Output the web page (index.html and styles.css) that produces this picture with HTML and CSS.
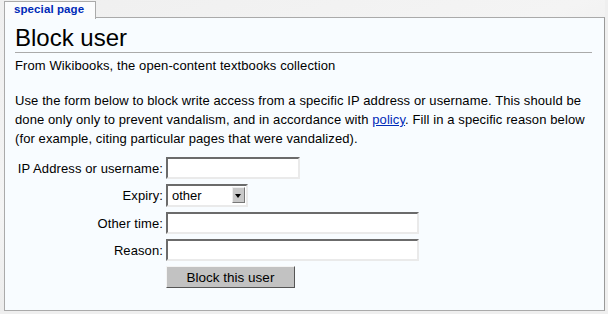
FILE: index.html
```html
<!DOCTYPE html>
<html lang="en">
<head>
  <meta charset="UTF-8">
  <title>Block user</title>
  <link rel="stylesheet" href="styles.css">
</head>
<body>
  <div class="page">
    <div class="tabs">
      <a class="tab" href="#">special page</a>
    </div>
    <div class="content">
      <h1 class="title">Block user</h1>
      <div class="sitesub">From Wikibooks, the open-content textbooks collection</div>
      <p class="intro">Use the form below to block write access from a specific IP address or username. This should be done only only to prevent vandalism, and in accordance with <a href="#">policy</a>. Fill in a specific reason below (for example, citing particular pages that were vandalized).</p>
      <form class="block-form">
        <label for="ip">IP Address or username:</label>
        <input id="ip" class="field field-short" type="text">

        <label for="expiry">Expiry:</label>
        <span class="select-wrap">
          <select id="expiry" class="select"><option>other</option></select>
          <span class="select-btn"></span>
        </span>

        <label for="other">Other time:</label>
        <input id="other" class="field field-long" type="text">

        <label for="reason">Reason:</label>
        <input id="reason" class="field field-long" type="text">

        <span></span>
        <button class="btn" type="button">Block this user</button>
      </form>
    </div>
  </div>
</body>
</html>
```

FILE: styles.css
```css
body{
  margin: 0;
  background: #efefef;
  font-family: "Liberation Sans", Arial, sans-serif;
  font-size: 13px;
  letter-spacing: 0.1px;
  color: #000;
}
.page{
  padding: 0 0 0 4px;
  width: 601px;
  background: linear-gradient(160deg, #efefef 0%, #f4f4f4 40%, #ececec 60%, #f1f1f1 100%);
}

.tabs{
  display: flex;
  height: 17px;
}
.tab{
  position: relative;
  z-index: 2;
  display: block;
  box-sizing: border-box;
  width: 92px;
  height: 18px;
  margin-top: 1px;
  padding-left: 9px;
  border: 1px solid #aaa;
  border-bottom: none;
  background: #fbfcfd;
  color: #002bb8;
  font-size: 11.5px;
  font-weight: bold;
  line-height: 14px;
  text-decoration: none;
}

.content{
  box-sizing: border-box;
  width: 601px;
  height: 294px;
  padding: 0 12px 0 10px;
  border: 1px solid #aaa;
  border-right-color: #999;
  background: #f8fcff;
}

.title{
  margin: 5px 0 0;
  border-bottom: 1px solid #aaa;
  font-size: 24px;
  font-weight: normal;
  letter-spacing: 0;
  line-height: 29px;
}

.sitesub{
  margin-top: 3px;
  line-height: 19px;
}

.intro{
  margin: 16px 0 0;
  line-height: 19px;
}
.intro a{
  color: #002bb8;
}

.block-form{
  display: grid;
  grid-template-columns: 148px auto;
  grid-template-rows: 22px 23px 22px 22px 22px;
  column-gap: 3px;
  row-gap: 5px;
  align-items: center;
  justify-items: start;
  margin-top: 9px;
}
.block-form label{
  justify-self: end;
}

.field{
  box-sizing: border-box;
  height: 22px;
  margin: 0;
  padding: 1px 3px;
  border: 2px solid;
  border-color: #6b6b6b #eaeaea #eaeaea #6b6b6b;
  background: #fff;
  font: inherit;
}
.field-short{
  width: 134px;
}
.field-long{
  width: 253px;
}

.select-wrap{
  position: relative;
  display: block;
  width: 82px;
  height: 23px;
}
.select{
  box-sizing: border-box;
  width: 100%;
  height: 100%;
  margin: 0;
  padding: 0 0 0 4px;
  border: 2px solid;
  border-color: #6b6b6b #eaeaea #eaeaea #6b6b6b;
  background: #fff;
  font: inherit;
  appearance: none;
  -webkit-appearance: none;
}
.select-btn{
  position: absolute;
  top: 3px;
  right: 3px;
  width: 13px;
  height: 16px;
  box-sizing: border-box;
  border: 1px solid;
  border-color: #eee #777 #777 #eee;
  background: #c8c8c8;
  pointer-events: none;
}
.select-btn::after{
  content: '';
  position: absolute;
  left: 2px;
  top: 6px;
  border-left: 3.5px solid transparent;
  border-right: 3.5px solid transparent;
  border-top: 4px solid #000;
}

.btn{
  box-sizing: border-box;
  width: 129px;
  height: 22px;
  margin: 0;
  padding: 0;
  border: 1px solid;
  border-color: #f4f4f4 #555 #555 #f4f4f4;
  background: #c2c2c2;
  font: inherit;
  font-size: 13.5px;
  color: #000;
}
```
